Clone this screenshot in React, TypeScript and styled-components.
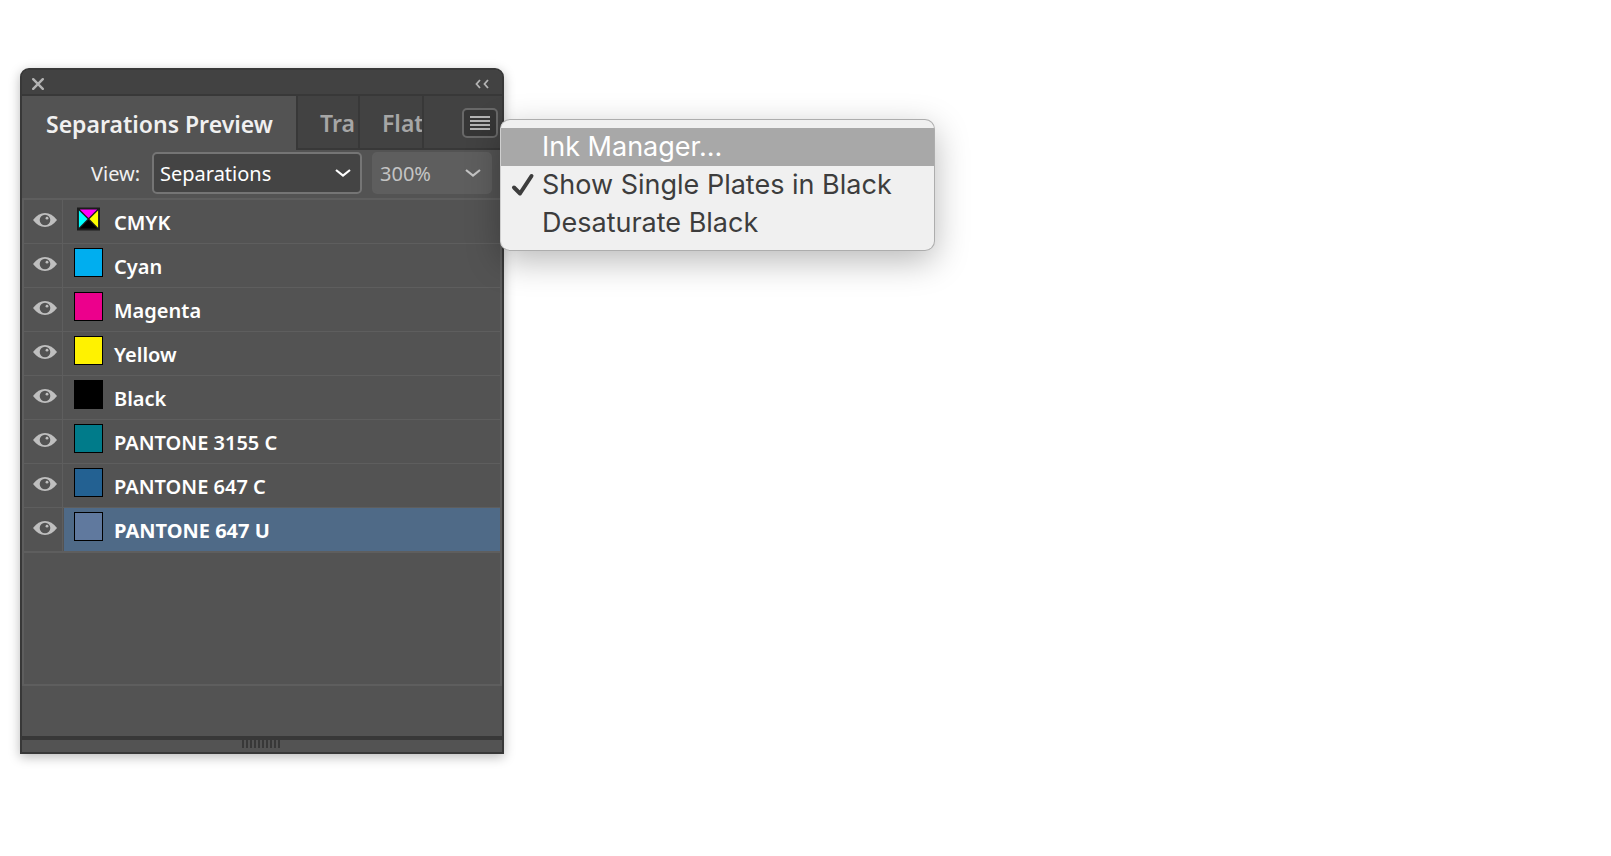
import React, { useState } from "react";
import styled, { createGlobalStyle } from "styled-components";

const Global = createGlobalStyle`
  *, *::before, *::after { box-sizing: border-box; }
  body {
    margin: 0;
    background: #fff;
    font-family: "Noto Sans", "Open Sans", sans-serif;
  }
  button, select { font: inherit; color: inherit; border: 0; background: none; margin: 0; padding: 0; }
`;

const Page = styled.main`
  min-height: 100vh;
  padding: 68px 20px;
`;

const Panel = styled.section`
  display: flex;
  flex-direction: column;
  width: 100%;
  max-width: 484px;
  border: 2px solid #383838;
  border-radius: 9px 9px 0 0;
  background: #535353;
  color: #fff;
  box-shadow: 0 3px 12px rgba(0, 0, 0, 0.28);
`;

const TitleBar = styled.header`
  display: flex;
  align-items: center;
  justify-content: space-between;
  height: 26px;
  padding: 3px 13px 0 10px;
  border-bottom: 2px solid #383838;
  border-radius: 7px 7px 0 0;
  background: #424242;
`;

const IconButton = styled.button`
  display: flex;
  color: #b4b4b4;
`;

const TabBar = styled.nav`
  display: flex;
  height: 54px;
`;

const Tab = styled.button<{ $active?: boolean; $width: number }>`
  flex: none;
  width: ${(p) => p.$width}px;
  padding-top: 2px;
  padding-left: ${(p) => (p.$active ? 24 : 22)}px;
  overflow: hidden;
  border-right: 2px solid #383838;
  border-bottom: ${(p) => (p.$active ? "0" : "2px solid #383838")};
  background: ${(p) => (p.$active ? "#535353" : "#424242")};
  color: ${(p) => (p.$active ? "#f0f0f0" : "#a6a6a6")};
  font-size: 23px;
  font-weight: 600;
  line-height: 30px;
  text-align: left;
  white-space: nowrap;
`;

const TabEnd = styled.div`
  display: flex;
  flex: 1;
  align-items: center;
  justify-content: flex-end;
  padding: 2px 4px 0 0;
  border-bottom: 2px solid #383838;
  background: #424242;
`;

const MenuAnchor = styled.div`
  position: relative;
`;

const MenuButton = styled.button`
  display: flex;
  align-items: center;
  justify-content: center;
  width: 36px;
  height: 30px;
  border: 2px solid #686868;
  border-radius: 5px;
  background: #363636;
`;

const Menu = styled.ul`
  position: absolute;
  z-index: 2;
  top: 11px;
  left: 38px;
  width: 435px;
  margin: 0;
  padding: 8px 0;
  list-style: none;
  border: 1px solid #adadad;
  border-left-color: #cfcfcf;
  border-radius: 10px;
  background: #f0f0f0;
  color: #3d3d3d;
  box-shadow: 0 10px 34px rgba(0, 0, 0, 0.28);
`;

const MenuItem = styled.button<{ $highlighted?: boolean }>`
  display: grid;
  grid-template-columns: 41px 1fr;
  align-items: center;
  width: 100%;
  height: 38px;
  background: ${(p) => (p.$highlighted ? "#a8a8a8" : "transparent")};
  color: ${(p) => (p.$highlighted ? "#fff" : "#3d3d3d")};
  font-family: Inter, sans-serif;
  font-size: 27px;
  line-height: 36px;
  text-align: left;
  white-space: nowrap;
`;

const CheckSlot = styled.span`
  display: flex;
  padding-left: 10px;
`;

const Toolbar = styled.div`
  display: flex;
  align-items: center;
  height: 48px;
  padding: 0 10px 2px 69px;
  font-size: 20px;
`;

const Label = styled.label`
  width: 61px;
  color: #f0f0f0;
`;

const SelectBox = styled.div<{ $dim?: boolean }>`
  display: grid;
  flex: ${(p) => (p.$dim ? "0 0 120px" : "1")};
  align-items: center;
  height: 42px;
  margin-left: ${(p) => (p.$dim ? 10 : 0)}px;
  border: 2px solid ${(p) => (p.$dim ? "#5e5e5e" : "#757575")};
  border-radius: 5px;
  background: ${(p) => (p.$dim ? "#5e5e5e" : "#444")};
  color: ${(p) => (p.$dim ? "#c4c4c4" : "#fff")};

  & > * { grid-area: 1 / 1; }
  & > svg { justify-self: end; margin-right: 8px; pointer-events: none; }
`;

const Select = styled.select`
  appearance: none;
  width: 100%;
  height: 38px;
  padding-left: 6px;
  opacity: 1;
`;

const InkList = styled.ul`
  min-height: 488px;
  margin: 0;
  padding: 0;
  list-style: none;
  border: 2px solid #5e5e5e;
`;

const InkRow = styled.li`
  display: flex;
  height: 44px;
  border-bottom: 1px solid #5e5e5e;
  &:last-child { height: 45px; border-bottom-width: 2px; }
`;

const EyeButton = styled.button`
  display: flex;
  flex: none;
  justify-content: flex-end;
  width: 39px;
  margin-right: 1px;
  padding: 13px 5px 0 0;
  border-right: 1px solid #5e5e5e;
`;

const InkButton = styled.button<{ $selected: boolean }>`
  display: flex;
  flex: 1;
  align-items: flex-start;
  gap: 11px;
  padding: 4px 10px;
  background: ${(p) => (p.$selected ? "#4f6a87" : "transparent")};
  font-size: 20px;
  font-weight: ${(p) => (p.$selected ? 700 : 600)};
  line-height: 38px;
  text-align: left;
`;

const Swatch = styled.span<{ $color: string }>`
  width: 29px;
  height: 29px;
  border: 1px solid #000;
  background: ${(p) => p.$color};
`;

const CompositeSwatch = styled.span`
  display: flex;
  width: 29px;
  padding: 3px;
`;

const Footer = styled.footer`
  display: flex;
  justify-content: center;
  height: 16px;
  margin-top: 50px;
  border-top: 4px solid #383838;
`;

const Grip = styled.div`
  width: 38px;
  height: 8px;
  margin-right: 2px;
  background: repeating-linear-gradient(90deg, #383838 0 2px, #535353 2px 4px);
`;

const Chevron = () => (
  <svg width="18" height="10" viewBox="0 0 18 10" fill="none" stroke="currentColor" strokeWidth="2.2" aria-hidden="true">
    <path d="M2 2 9 7.6 16 2" />
  </svg>
);

const Eye = () => (
  <svg width="24" height="14" viewBox="0 0 24 14" aria-hidden="true">
    <path d="M0 7C3.5 2.3 7.5 0 12 0s8.500 2.300 12 7c-3.500 4.700-7.500 7-12 7S3.500 11.700 0 7Z" fill="#bfbfbf" />
    <circle cx="12" cy="7" r="5.300" fill="#535353" />
    <circle cx="14" cy="5.200" r="1.400" fill="#bfbfbf" />
  </svg>
);

const Cmyk = () => (
  <svg width="24" height="24" viewBox="0 0 24 24" aria-hidden="true">
    <path fill="#1c1c1c" d="M0 0h24v24H0z" />
    <path fill="#f0f" d="M3 2h18l-9 9z" />
    <path fill="#0ff" d="M2 3v18l9-9z" />
    <path fill="#ff0" d="M22 3v18l-9-9z" />
    <path fill="#000" d="M3 22h18l-9-9z" />
  </svg>
);

const inks = [
  { name: "CMYK", color: null },
  { name: "Cyan", color: "#00aeef" },
  { name: "Magenta", color: "#ec008c" },
  { name: "Yellow", color: "#fff200" },
  { name: "Black", color: "#000" },
  { name: "PANTONE 3155 C", color: "#007b8a" },
  { name: "PANTONE 647 C", color: "#236192" },
  { name: "PANTONE 647 U", color: "#60799e" },
];

export default function App() {
  const [selected, setSelected] = useState("PANTONE 647 U");
  const [single, setSingle] = useState(true);

  return (
    <Page>
      <Global />
      <Panel>
        <TitleBar>
          <IconButton aria-label="Close">
            <svg width="12" height="12" viewBox="0 0 12 12" stroke="currentColor" strokeWidth="2.400" strokeLinecap="round">
              <path d="m1.200 1.200 9.600 9.600M10.800 1.200 1.200 10.800" />
            </svg>
          </IconButton>
          <IconButton aria-label="Collapse">
            <svg width="14" height="10" viewBox="0 0 14 10" fill="none" stroke="currentColor" strokeWidth="1.800">
              <path d="M5 1 1.500 5 5 9M13 1 9.500 5 13 9" />
            </svg>
          </IconButton>
        </TitleBar>
        <TabBar>
          <Tab $active $width={276}>Separations Preview</Tab>
          <Tab $width={62}>Tra</Tab>
          <Tab $width={64}>Flat</Tab>
          <TabEnd>
            <MenuAnchor>
              <MenuButton aria-label="Panel menu">
                <svg width="20" height="14" viewBox="0 0 20 14" fill="#b4b4b4">
                  <path d="M0 0h20v2H0zM0 4h20v2H0zM0 8h20v2H0zM0 12h20v2H0z" />
                </svg>
              </MenuButton>
              <Menu>
                <li>
                  <MenuItem $highlighted><CheckSlot />Ink Manager...</MenuItem>
                </li>
                <li>
                  <MenuItem onClick={() => setSingle(!single)}>
                    <CheckSlot>
                      {single && (
                        <svg width="24" height="24" viewBox="0 0 24 24" fill="none" stroke="currentColor" strokeWidth="4" strokeLinecap="round" strokeLinejoin="round">
                          <path d="M3 14.500 9 20.500 20.500 3" />
                        </svg>
                      )}
                    </CheckSlot>
                    Show Single Plates in Black
                  </MenuItem>
                </li>
                <li>
                  <MenuItem><CheckSlot />Desaturate Black</MenuItem>
                </li>
              </Menu>
            </MenuAnchor>
          </TabEnd>
        </TabBar>
        <Toolbar>
          <Label htmlFor="view">View:</Label>
          <SelectBox>
            <Select id="view"><option>Separations</option></Select>
            <Chevron />
          </SelectBox>
          <SelectBox $dim>
            <Select aria-label="Ink limit" disabled><option>300%</option></Select>
            <Chevron />
          </SelectBox>
        </Toolbar>
        <InkList>
          {inks.map(({ name, color }) => (
            <InkRow key={name}>
              <EyeButton aria-label={name + " visibility"}><Eye /></EyeButton>
              <InkButton $selected={name === selected} onClick={() => setSelected(name)}>
                {color ? <Swatch $color={color} /> : <CompositeSwatch><Cmyk /></CompositeSwatch>}
                {name}
              </InkButton>
            </InkRow>
          ))}
        </InkList>
        <Footer><Grip /></Footer>
      </Panel>
    </Page>
  );
}
